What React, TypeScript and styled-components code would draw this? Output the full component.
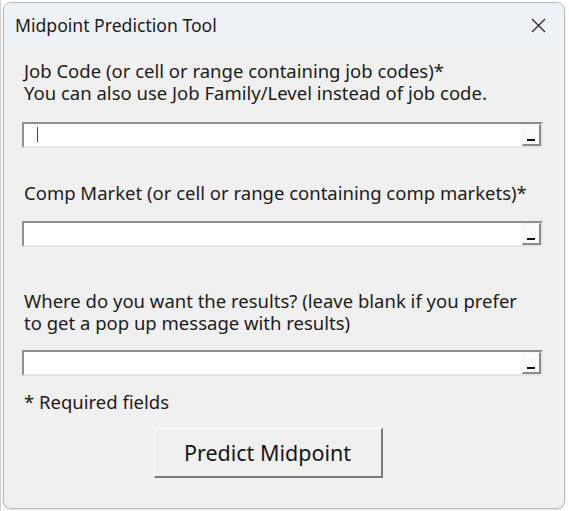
import React from "react";
import styled, { createGlobalStyle } from "styled-components";

const Global = createGlobalStyle`
  html, body { margin: 0; padding: 0; background: #ffffff; }
  body { width: 569px; height: 511px; overflow: hidden; }
`;

const Page = styled.div`
  width: 569px;
  height: 511px;
  padding: 2px 0 0 3px;
  box-sizing: border-box;
  background:
    linear-gradient(#d4d4d4, #d4d4d4) 0 0 / 1px 100% no-repeat,
    #ffffff;
`;

const Window = styled.div`
  width: 562px;
  height: 507px;
  box-sizing: border-box;
  border: 1px solid #b9b9b9;
  border-radius: 8px;
  background: #f0f0f0;
  overflow: hidden;
  display: flex;
  flex-direction: column;
  box-shadow: 0 1px 3px rgba(0, 0, 0, 0.12);
`;

const TitleBar = styled.div`
  height: 45px;
  flex: none;
  background: #eef2f6;
  display: flex;
  align-items: center;
  justify-content: space-between;
  padding: 0 18px 0 11px;
  font-family: "Noto Sans", "Open Sans", sans-serif;
  font-size: 17.6px;
  color: #1b1b1b;
`;

const Title = styled.span`
  margin-top: -2px;
`;

const Body = styled.div`
  flex: 1;
  display: flex;
  flex-direction: column;
  padding: 0 21px 0 18px;
  font-family: "Noto Sans", "Open Sans", sans-serif;
  font-size: 18.5px;
  line-height: 22px;
  color: #1c1c1c;
`;

const Label = styled.div<{ $top: number }>`
  margin-top: ${(p) => p.$top}px;
  padding-left: 2px;
  white-space: nowrap;
`;

const Field = styled.div<{ $top: number }>`
  margin-top: ${(p) => p.$top}px;
  height: 26px;
  box-sizing: border-box;
  border-top: 2px solid #8f8f8f;
  border-left: 2px solid #8f8f8f;
  border-bottom: 2px solid #e6e6e6;
  border-right: 2px solid #e6e6e6;
  background: #ffffff;
  display: flex;
  align-items: stretch;
  position: relative;
`;

const Caret = styled.span`
  position: absolute;
  left: 13px;
  top: 3px;
  width: 1px;
  height: 15px;
  background: #444;
`;

const Spacer = styled.div`
  flex: 1;
`;

const DropButton = styled.div`
  width: 19px;
  box-sizing: border-box;
  border-top: 1px solid #f4f4f4;
  border-left: 1px solid #f4f4f4;
  border-right: 2px solid #8a8a8a;
  border-bottom: 2px solid #8a8a8a;
  background: #fbfbfb;
  display: flex;
  align-items: flex-end;
  justify-content: center;
  padding-bottom: 3px;
`;

const Dash = styled.span`
  width: 8px;
  height: 2px;
  background: #111;
`;

const Footer = styled.div`
  display: flex;
  justify-content: center;
  margin-top: 15px;
  padding-right: 29px;
`;

const Button = styled.div`
  width: 229px;
  height: 50px;
  box-sizing: border-box;
  border-top: 1px solid #ffffff;
  border-left: 1px solid #ffffff;
  border-right: 2px solid #7c7c7c;
  border-bottom: 2px solid #7c7c7c;
  background: #f0f0f0;
  display: flex;
  align-items: center;
  justify-content: center;
  font-family: "Noto Sans", "Open Sans", sans-serif;
  font-size: 21.5px;
  color: #161616;
`;

const Close = () => (
  <svg width="15" height="15" viewBox="0 0 15 15">
    <path d="M1 1 L14 14 M14 1 L1 14" stroke="#2a2a2a" strokeWidth="1.3" />
  </svg>
);

const RefField = ({ top, caret }: { top: number; caret?: boolean }) => (
  <Field $top={top}>
    {caret && <Caret />}
    <Spacer />
    <DropButton>
      <Dash />
    </DropButton>
  </Field>
);

export default function App() {
  return (
    <>
      <Global />
      <Page>
        <Window>
          <TitleBar>
            <Title>Midpoint Prediction Tool</Title>
            <Close />
          </TitleBar>
          <Body>
            <Label $top={12}>
              Job Code (or cell or range containing job codes)*
              <br />
              You can also use Job Family/Level instead of job code.
            </Label>
            <RefField top={18} caret />
            <Label $top={34}>Comp Market (or cell or range containing comp markets)*</Label>
            <RefField top={17} />
            <Label $top={43}>
              Where do you want the results? (leave blank if you prefer
              <br />
              to get a pop up message with results)
            </Label>
            <RefField top={16} />
            <Label $top={15}>* Required fields</Label>
            <Footer>
              <Button>Predict Midpoint</Button>
            </Footer>
          </Body>
        </Window>
      </Page>
    </>
  );
}
